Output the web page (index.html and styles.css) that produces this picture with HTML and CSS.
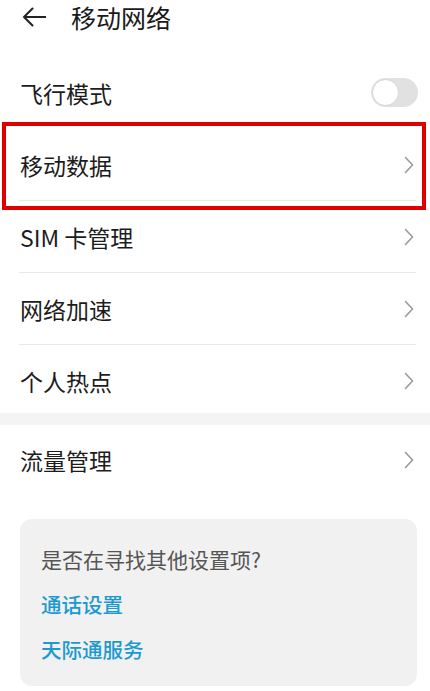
FILE: index.html
```html
<!DOCTYPE html>
<html lang="zh-CN">
<head>
<meta charset="utf-8">
<title>移动网络</title>
<link rel="stylesheet" href="styles.css">
</head>
<body>
<div class="page">
  <header class="header">
    <svg class="back" width="24" height="20" viewBox="0 0 24 20" aria-hidden="true">
      <path d="M23.5 10 H2 M10.5 1.5 L2 10 L10.5 18.5" fill="none" stroke="#222" stroke-width="2" stroke-linecap="round" stroke-linejoin="round"/>
    </svg>
    <h1 class="title">移动网络</h1>
  </header>

  <div class="group">
    <div class="row">
      <span class="label">飞行模式</span>
      <span class="toggle"><span class="knob"></span></span>
    </div>
    <div class="row highlighted">
      <span class="label">移动数据</span>
      <svg class="chev" width="10" height="18" viewBox="0 0 10 18" aria-hidden="true"><path d="M1.5 1.5 L8.5 9 L1.5 16.5" fill="none" stroke="#9a9a9a" stroke-width="1.6" stroke-linecap="round" stroke-linejoin="round"/></svg>
      <span class="redbox"></span>
    </div>
    <div class="row">
      <span class="label">SIM 卡管理</span>
      <svg class="chev" width="10" height="18" viewBox="0 0 10 18" aria-hidden="true"><path d="M1.5 1.5 L8.5 9 L1.5 16.5" fill="none" stroke="#9a9a9a" stroke-width="1.6" stroke-linecap="round" stroke-linejoin="round"/></svg>
    </div>
    <div class="row">
      <span class="label">网络加速</span>
      <svg class="chev" width="10" height="18" viewBox="0 0 10 18" aria-hidden="true"><path d="M1.5 1.5 L8.5 9 L1.5 16.5" fill="none" stroke="#9a9a9a" stroke-width="1.6" stroke-linecap="round" stroke-linejoin="round"/></svg>
    </div>
    <div class="row last">
      <span class="label">个人热点</span>
      <svg class="chev" width="10" height="18" viewBox="0 0 10 18" aria-hidden="true"><path d="M1.5 1.5 L8.5 9 L1.5 16.5" fill="none" stroke="#9a9a9a" stroke-width="1.6" stroke-linecap="round" stroke-linejoin="round"/></svg>
    </div>
  </div>

  <div class="band"></div>

  <div class="group">
    <div class="row last flow">
      <span class="label">流量管理</span>
      <svg class="chev" width="10" height="18" viewBox="0 0 10 18" aria-hidden="true"><path d="M1.5 1.5 L8.5 9 L1.5 16.5" fill="none" stroke="#9a9a9a" stroke-width="1.6" stroke-linecap="round" stroke-linejoin="round"/></svg>
    </div>
  </div>

  <div class="card">
    <p class="card-title">是否在寻找其他设置项?</p>
    <a class="link">通话设置</a>
    <a class="link">天际通服务</a>
  </div>
</div>
</body>
</html>
```

FILE: styles.css
```css
html, body {
  margin: 0;
  padding: 0;
  background: #ffffff;
}

body {
  font-family: "Noto Sans CJK SC", "Noto Sans", Roboto, sans-serif;
  color: #1f1f1f;
  width: 430px;
  height: 691px;
  overflow: hidden;
}

.page {
  display: flex;
  flex-direction: column;
}

.header {
  height: 34px;
  display: flex;
  align-items: center;
  padding-left: 22px;
  gap: 25px;
}

.back {
  display: block;
  flex: none;
}

.title {
  margin: 0;
  font-size: 25px;
  line-height: 34px;
  font-weight: 400;
  color: #1a1a1a;
}

.group {
  padding: 0 14px 0 19px;
}

.group:first-of-type {
  margin-top: 23px;
}

.row {
  position: relative;
  height: 71px;
  display: flex;
  align-items: center;
  justify-content: space-between;
  padding: 0 2px 0 1px;
  border-bottom: 1px solid #e9e9e9;
}

.row:first-child {
  border-bottom-color: transparent;
}

.row.last {
  border-bottom: none;
}

.row.flow {
  height: 70px;
}

.label {
  font-size: 23px;
  line-height: 32px;
  color: #1c1c1c;
}

.chev {
  display: block;
  flex: none;
}

.toggle {
  width: 47px;
  height: 29px;
  border-radius: 15px;
  background: #e1e1e1;
  margin-right: -4px;
  position: relative;
  flex: none;
}

.knob {
  position: absolute;
  left: 1px;
  top: 1px;
  width: 25px;
  height: 25px;
  border-radius: 50%;
  background: #ffffff;
  border: 1px solid #d6d6d6;
}

.redbox {
  position: absolute;
  left: -17px;
  right: -10px;
  top: -7px;
  bottom: -10px;
  border: 4.5px solid #e10000;
  pointer-events: none;
}

.band {
  height: 12px;
  background: #f4f4f4;
  margin-top: -3px;
}

.card {
  margin: 24px 13px 0 20px;
  background: #f1f1f1;
  border-radius: 12px;
  padding: 26px 20px 23px 21px;
  display: flex;
  flex-direction: column;
  gap: 17px;
}

.card-title {
  margin: 0;
  font-size: 21px;
  line-height: 28px;
  color: #555555;
}

.link {
  font-size: 20.5px;
  line-height: 28px;
  font-weight: 500;
  color: #1c9ad0;
}
```
